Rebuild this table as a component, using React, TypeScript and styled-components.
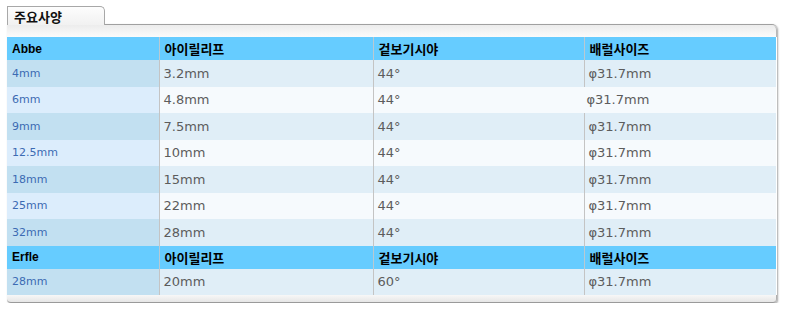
import React from "react";
import styled, { createGlobalStyle } from "styled-components";

const Global = createGlobalStyle`
  html, body { margin: 0; padding: 0; background: #ffffff; }
  body { font-family: "DejaVu Sans", "Noto Sans CJK KR", sans-serif; }
`;

const Wrapper = styled.div`
  width: 770px;
  margin: 6px 0 0 7px;
`;

const Tab = styled.div`
  position: relative;
  z-index: 1;
  width: 98px;
  height: 19px;
  margin-bottom: -1px;
  border: 1px solid #a8a8a8;
  border-bottom: none;
  border-top-right-radius: 5px;
  background: linear-gradient(#fdfdfd, #f1f1f1);
  display: flex;
  align-items: center;
  padding-left: 6px;
  box-sizing: border-box;
  font-family: "Noto Sans CJK KR", sans-serif;
  font-weight: bold;
  font-size: 13px;
  color: #111;
`;

const Box = styled.div`
  border-top: 1px solid #a0a0a0;
  border-top-right-radius: 5px;
  box-shadow: 1px 1px 2px rgba(0, 0, 0, 0.35);
  border-bottom-left-radius: 4px;
  border-bottom-right-radius: 4px;
`;

const TopStrip = styled.div`
  height: 12px;
  background: linear-gradient(#ececec, #fbfbfb);
  border-right: 1px solid #b8b8b8;
  border-top-right-radius: 5px;
`;

const BottomStrip = styled.div`
  height: 7px;
  background: linear-gradient(#f7f7f7, #e6e6e6);
  border-bottom: 1px solid #9a9a9a;
  border-right: 1px solid #b0b0b0;
  border-bottom-left-radius: 4px;
  border-bottom-right-radius: 4px;
`;

const Table = styled.table`
  width: 769px;
  border-collapse: collapse;
  table-layout: fixed;
`;

const HeadRow = styled.tr`
  height: 23px;
  background: #66ccff;
`;

const HeadCell = styled.th<{ $sep?: boolean; $ko?: boolean }>`
  padding: 0 0 0 5px;
  text-align: left;
  font-family: ${(p) =>
    p.$ko ? `"Noto Sans CJK KR", sans-serif` : `"Liberation Sans", "Noto Sans CJK KR", sans-serif`};
  font-weight: bold;
  font-size: ${(p) => (p.$ko ? "13px" : "12px")};
  color: #000;
  border-left: ${(p) => (p.$sep ? "1px solid #b9c9d2" : "none")};
`;

const DataRow = styled.tr<{ $alt: boolean }>`
  height: 26.5px;
  background: ${(p) => (p.$alt ? "#f6fafd" : "#e0eef7")};
`;

const FirstCell = styled.td<{ $alt: boolean }>`
  padding: 0 0 0 5px;
  font-size: 11px;
  color: #3c6bb3;
  background: ${(p) => (p.$alt ? "#dcedfc" : "#c2e0f1")};
`;

const ValueCell = styled.td<{ $sep?: boolean; $pad?: number }>`
  padding: 0 0 0 ${(p) => p.$pad ?? 4}px;
  font-size: 13px;
  color: #5c5c5c;
  border-left: ${(p) => (p.$sep === false ? "1px solid transparent" : "1px solid #c4c4c4")};
`;

type Row = { size: string; eye: string; fov: string; barrel: string; noSep?: boolean };

const abbe: Row[] = [
  { size: "4mm", eye: "3.2mm", fov: "44°", barrel: "φ31.7mm" },
  { size: "6mm", eye: "4.8mm", fov: "44°", barrel: "φ31.7mm", noSep: true },
  { size: "9mm", eye: "7.5mm", fov: "44°", barrel: "φ31.7mm" },
  { size: "12.5mm", eye: "10mm", fov: "44°", barrel: "φ31.7mm" },
  { size: "18mm", eye: "15mm", fov: "44°", barrel: "φ31.7mm" },
  { size: "25mm", eye: "22mm", fov: "44°", barrel: "φ31.7mm" },
  { size: "32mm", eye: "28mm", fov: "44°", barrel: "φ31.7mm" },
];

const erfle: Row[] = [{ size: "28mm", eye: "20mm", fov: "60°", barrel: "φ31.7mm" }];

const Header = ({ name }: { name: string }) => (
  <HeadRow>
    <HeadCell>{name}</HeadCell>
    <HeadCell $sep $ko>아이릴리프</HeadCell>
    <HeadCell $sep $ko>겉보기시야</HeadCell>
    <HeadCell $sep $ko>배럴사이즈</HeadCell>
  </HeadRow>
);

const Rows = ({ rows }: { rows: Row[] }) => (
  <>
    {rows.map((r, i) => {
      const alt = i % 2 === 1;
      return (
        <DataRow key={r.size} $alt={alt}>
          <FirstCell $alt={alt}>{r.size}</FirstCell>
          <ValueCell>{r.eye}</ValueCell>
          <ValueCell>{r.fov}</ValueCell>
          <ValueCell $sep={!r.noSep} $pad={r.noSep ? 2 : 4}>
            {r.barrel}
          </ValueCell>
        </DataRow>
      );
    })}
  </>
);

export default function App() {
  return (
    <>
      <Global />
      <Wrapper>
        <Tab>주요사양</Tab>
        <Box>
          <TopStrip />
          <Table>
            <colgroup>
              <col style={{ width: 152 }} />
              <col style={{ width: 214 }} />
              <col style={{ width: 211 }} />
              <col style={{ width: 192 }} />
            </colgroup>
            <tbody>
              <Header name="Abbe" />
              <Rows rows={abbe} />
              <Header name="Erfle" />
              <Rows rows={erfle} />
            </tbody>
          </Table>
          <BottomStrip />
        </Box>
      </Wrapper>
    </>
  );
}
